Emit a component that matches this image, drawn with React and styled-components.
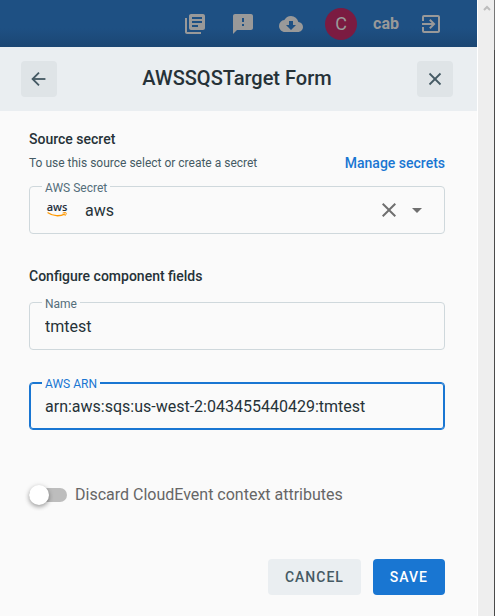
import React, { useState } from "react";
import styled, { createGlobalStyle, css } from "styled-components";
import {
  MdLibraryBooks,
  MdFeedback,
  MdCloudDownload,
  MdExitToApp,
  MdClose,
  MdArrowDropDown,
} from "react-icons/md";
import { ArrowLeft, X } from "lucide-react";

const GlobalStyle = createGlobalStyle`
  *, *::before, *::after { box-sizing: border-box; }
  body {
    margin: 0;
    background: #fafafa;
    font-family: Roboto, "Liberation Sans", sans-serif;
    color: #263238;
  }
  button, input, select { font-family: inherit; }
`;

const Page = styled.div`
  display: flex;
  min-height: 100vh;
`;

const Main = styled.main`
  flex: 1;
  min-width: 0;
`;

const TopBar = styled.nav`
  display: flex;
  align-items: center;
  justify-content: flex-end;
  gap: 24px;
  height: 47px;
  padding: 0 34px 0 24px;
  background: linear-gradient(#1e5083 60%, #1b4673);
  color: #999999;
`;

const BarButton = styled.button`
  display: flex;
  padding: 0;
  border: 0;
  background: none;
  color: inherit;
  cursor: pointer;
`;

const Account = styled.div`
  display: flex;
  align-items: center;
  gap: 16px;
  margin: 0 -4px 0 -2px;
  font-size: 16px;
  font-weight: 700;
`;

const Avatar = styled.span`
  display: flex;
  align-items: center;
  justify-content: center;
  width: 32px;
  height: 32px;
  border-radius: 50%;
  background: #7b1b41;
  font-size: 18px;
  font-weight: 400;
`;

const FormHeader = styled.header`
  display: flex;
  align-items: center;
  justify-content: space-between;
  height: 64px;
  padding: 0 24px 0 21px;
  background: #eaeef1;
`;

const Title = styled.h1`
  margin: 0;
  padding-bottom: 2px;
  font-size: 20px;
  line-height: 24px;
  font-weight: 500;
`;

const SquareButton = styled.button`
  display: flex;
  align-items: center;
  justify-content: center;
  width: 36px;
  height: 36px;
  padding: 0;
  border: 0;
  border-radius: 4px;
  background: #dfe4e7;
  color: #455a64;
  cursor: pointer;
`;

const Form = styled.form`
  padding: 20px 32px 20px 29px;
`;

const SectionTitle = styled.h2`
  margin: 0;
  font-size: 14px;
  line-height: 16px;
  font-weight: 500;
`;

const HelpRow = styled.div`
  display: flex;
  align-items: flex-start;
  justify-content: space-between;
  margin: 8px 0 15px;
  font-size: 12px;
  line-height: 16px;
  color: #455a64;
`;

const ManageLink = styled.a`
  font-size: 14px;
  line-height: 16px;
  font-weight: 500;
  color: #1976d2;
  text-decoration: none;
`;

const Field = styled.div`
  position: relative;
  display: flex;
  align-items: center;
  height: 48px;
  margin-bottom: ${(p) => p.$gap}px;
  border: 1px solid #cfd8dc;
  border-radius: 4px;

  &:focus-within,
  &[data-active="true"] {
    border-color: #1976d2;
    box-shadow: inset 0 0 0 1px #1976d2;
  }
`;

const FieldLabel = styled.label`
  position: absolute;
  top: -7px;
  left: 12px;
  padding: 0 3px;
  background: #fafafa;
  font-size: 12px;
  line-height: 16px;
  color: ${(p) => (p.$active ? "#1976d2" : "#546e7a")};
`;

const controlText = css`
  flex: 1;
  min-width: 0;
  height: 100%;
  border: 0;
  outline: 0;
  background: transparent;
  font-size: 16px;
  color: #263238;
`;

const TextInput = styled.input`
  ${controlText}
  padding: 0 15px;
`;

const SecretSelect = styled.select`
  ${controlText}
  appearance: none;
  padding: 0 0 0 16px;
`;

const LogoSlot = styled.span`
  display: flex;
  margin-left: 15px;
`;

const ClearButton = styled(BarButton)`
  margin-right: 4px;
  color: #6f6f6f;
`;

const DropArrow = styled(MdArrowDropDown)`
  margin-right: 15px;
  color: #6f6f6f;
`;

const FieldsTitle = styled(SectionTitle)`
  margin-bottom: 18px;
`;

const SwitchRow = styled.label`
  display: flex;
  align-items: center;
  gap: 8px;
  height: 24px;
  margin-bottom: 52px;
  font-size: 16px;
  line-height: 24px;
  color: #666666;
  cursor: pointer;
`;

const Switch = styled.input`
  appearance: none;
  display: flex;
  align-items: center;
  width: 38px;
  height: 14px;
  margin: 0;
  border-radius: 7px;
  background: #bdbdbd;
  cursor: pointer;

  &::before {
    content: "";
    width: 20px;
    height: 20px;
    flex: none;
    border-radius: 50%;
    background: #ffffff;
    box-shadow: 0 2px 4px rgba(0, 0, 0, 0.3), 0 1px 6px rgba(0, 0, 0, 0.12);
  }
  &:checked {
    justify-content: flex-end;
    background: #90bdea;
  }
`;

const Actions = styled.div`
  display: flex;
  justify-content: flex-end;
  gap: 12px;
`;

const ActionButton = styled.button`
  height: 36px;
  padding: 0 17px;
  border: 0;
  border-radius: 4px;
  background: ${(p) => (p.$primary ? "#1976d2" : "#eaeef1")};
  color: ${(p) => (p.$primary ? "#ffffff" : "#455a64")};
  font-size: 14px;
  font-weight: 500;
  letter-spacing: 1px;
  text-transform: uppercase;
  cursor: pointer;
`;

const ScrollTrack = styled.aside`
  display: flex;
  justify-content: center;
  width: 18px;
  padding-top: 4px;
  border-left: 1px solid #ffffff;
  background: linear-gradient(#777777 50px, #4a4a4a 50px) right / 1px 100% no-repeat #eeeeee;
`;

function AwsLogo() {
  return (
    <svg width="24" height="24" viewBox="0 0 24 24" role="img" aria-label="AWS">
      <text x="12" y="13" textAnchor="middle" fontFamily="Open Sans, sans-serif" fontWeight="600" fontSize="11" fill="#252f3e">
        aws
      </text>
      <path d="M3 14.8 C8 18.4 15 18.5 19.6 16.1" fill="none" stroke="#ff9900" strokeWidth="1.3" strokeLinecap="round" />
      <path d="M18 14.9 C19.4 14.4 21 14.4 21.2 14.9 C21.4 15.5 20.9 16.9 20 17.7" fill="none" stroke="#ff9900" strokeWidth="1" strokeLinecap="round" />
    </svg>
  );
}

export default function App() {
  const [secret, setSecret] = useState("aws");
  const [name, setName] = useState("tmtest");
  const [arn, setArn] = useState("arn:aws:sqs:us-west-2:043455440429:tmtest");
  const [discard, setDiscard] = useState(false);

  return (
    <Page>
      <GlobalStyle />
      <Main>
        <TopBar>
          <BarButton aria-label="Documentation"><MdLibraryBooks size={24} /></BarButton>
          <BarButton aria-label="Feedback"><MdFeedback size={24} /></BarButton>
          <BarButton aria-label="Download"><MdCloudDownload size={24} /></BarButton>
          <Account>
            <Avatar>C</Avatar>
            <span>cab</span>
          </Account>
          <BarButton aria-label="Sign out"><MdExitToApp size={24} /></BarButton>
        </TopBar>
        <FormHeader>
          <SquareButton aria-label="Back"><ArrowLeft size={22} strokeWidth={2} strokeLinecap="butt" strokeLinejoin="miter" /></SquareButton>
          <Title>AWSSQSTarget Form</Title>
          <SquareButton aria-label="Close"><X size={22} strokeWidth={2} strokeLinecap="butt" /></SquareButton>
        </FormHeader>
        <Form onSubmit={(e) => e.preventDefault()}>
          <SectionTitle>Source secret</SectionTitle>
          <HelpRow>
            <span>To use this source select or create a secret</span>
            <ManageLink href="#secrets">Manage secrets</ManageLink>
          </HelpRow>
          <Field $gap={34}>
            <FieldLabel htmlFor="secret">AWS Secret</FieldLabel>
            <LogoSlot><AwsLogo /></LogoSlot>
            <SecretSelect id="secret" value={secret} onChange={(e) => setSecret(e.target.value)}>
              <option value="aws">aws</option>
              <option value="" />
            </SecretSelect>
            <ClearButton type="button" aria-label="Clear" onClick={() => setSecret("")}>
              <MdClose size={24} />
            </ClearButton>
            <DropArrow size={24} />
          </Field>
          <FieldsTitle>Configure component fields</FieldsTitle>
          <Field $gap={32}>
            <FieldLabel htmlFor="name">Name</FieldLabel>
            <TextInput id="name" value={name} onChange={(e) => setName(e.target.value)} />
          </Field>
          <Field $gap={53} data-active="true">
            <FieldLabel htmlFor="arn" $active>AWS ARN</FieldLabel>
            <TextInput id="arn" value={arn} onChange={(e) => setArn(e.target.value)} />
          </Field>
          <SwitchRow>
            <Switch type="checkbox" role="switch" checked={discard} onChange={(e) => setDiscard(e.target.checked)} />
            Discard CloudEvent context attributes
          </SwitchRow>
          <Actions>
            <ActionButton type="button">Cancel</ActionButton>
            <ActionButton type="submit" $primary>Save</ActionButton>
          </Actions>
        </Form>
      </Main>
      <ScrollTrack aria-hidden="true">
        <svg width="8" height="8" viewBox="0 0 8 8">
          <path d="M1 6 L4 3 L7 6" fill="none" stroke="#bdbdbd" strokeWidth="2" />
        </svg>
      </ScrollTrack>
    </Page>
  );
}
